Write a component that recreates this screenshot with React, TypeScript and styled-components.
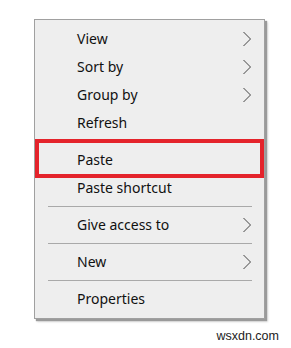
import React from "react";
import styled, { createGlobalStyle } from "styled-components";

const Global = createGlobalStyle`
  html, body { margin: 0; padding: 0; background: #ffffff; }
  body { width: 291px; height: 348px; overflow: hidden; }
`;

const Page = styled.div`
  display: flex;
  flex-direction: column;
  padding: 19px 0 0 34px;
  width: 291px;
  height: 348px;
  box-sizing: border-box;
`;

const Menu = styled.div`
  position: relative;
  width: 231px;
  box-sizing: border-box;
  background: #eeeeee;
  border: 1px solid #a0a0a0;
  box-shadow: 2px 2px 1px #9a9a9a, 3px 3px 2px rgba(0,0,0,0.15);
  padding: 5px 0;
  display: flex;
  flex-direction: column;
  font-family: "Noto Sans", "Open Sans", sans-serif;
  font-size: 14px;
  color: #111;
`;

const Row = styled.div`
  height: 28px;
  display: flex;
  align-items: center;
  justify-content: space-between;
  padding: 0 12px 0 42px;
`;

const Label = styled.span`
  line-height: 1;
  padding-bottom: 1px;
`;

const Sep = styled.div`
  height: 9px;
  display: flex;
  align-items: center;
  padding: 0 12px 0 13px;
  &::after {
    content: "";
    flex: 1;
    height: 1px;
    background: #a9a9a9;
  }
`;

const Highlight = styled.div`
  position: absolute;
  left: 0px;
  top: 119px;
  width: 229px;
  height: 39px;
  box-sizing: border-box;
  border: 4px solid #e4232b;
`;

const Watermark = styled.div`
  align-self: flex-end;
  margin: 10px 12px 0 0;
  font-family: "Liberation Sans", Arial, sans-serif;
  font-size: 12.5px;
  line-height: 14px;
  color: #222;
`;

const Chevron = () => (
  <svg width="10" height="16" viewBox="0 0 10 16">
    <path d="M1.5 1 L8.5 8 L1.5 15" fill="none" stroke="#444" strokeWidth="1" />
  </svg>
);

type Item = { label?: string; sub?: boolean; sep?: boolean };

const items: Item[] = [
  { label: "View", sub: true },
  { label: "Sort by", sub: true },
  { label: "Group by", sub: true },
  { label: "Refresh" },
  { sep: true },
  { label: "Paste" },
  { label: "Paste shortcut" },
  { sep: true },
  { label: "Give access to", sub: true },
  { sep: true },
  { label: "New", sub: true },
  { sep: true },
  { label: "Properties" },
];

export default function App() {
  return (
    <>
      <Global />
      <Page>
        <Menu>
          {items.map((it, i) =>
            it.sep ? (
              <Sep key={i} />
            ) : (
              <Row key={i}>
                <Label>{it.label}</Label>
                {it.sub && <Chevron />}
              </Row>
            )
          )}
          <Highlight />
        </Menu>
        <Watermark>wsxdn.com</Watermark>
      </Page>
    </>
  );
}
